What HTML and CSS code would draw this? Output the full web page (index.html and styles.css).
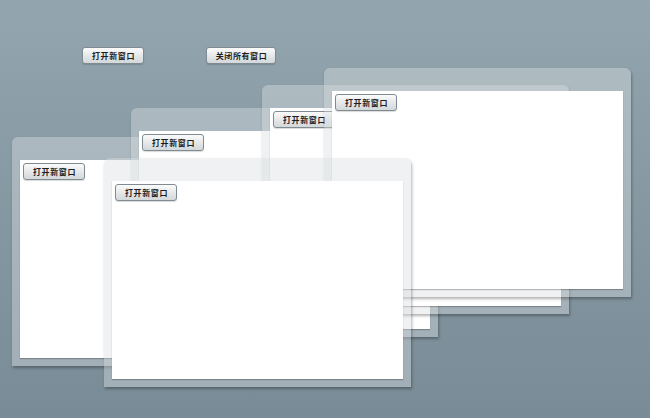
FILE: index.html
```html
<!DOCTYPE html>
<html lang="zh-CN">
<head>
    <meta charset="UTF-8">
    <meta name="viewport" content="width=device-width, initial-scale=1.0">
    <title>窗口</title>
    <link rel="stylesheet" href="styles.css">
</head>
<body>
    <div class="toolbar">
        <button class="btn">打开新窗口</button>
        <button class="btn">关闭所有窗口</button>
    </div>

    <div class="desktop">
        <div class="window win-a">
            <div class="window-body"><button class="btn">打开新窗口</button></div>
        </div>
        <div class="window win-b">
            <div class="window-body"><button class="btn">打开新窗口</button></div>
        </div>
        <div class="window win-c">
            <div class="window-body"><button class="btn">打开新窗口</button></div>
        </div>
        <div class="window win-d">
            <div class="window-body"><button class="btn">打开新窗口</button></div>
        </div>
        <div class="window win-e">
            <div class="window-body"><button class="btn">打开新窗口</button></div>
        </div>
    </div>
</body>
</html>
```

FILE: styles.css
```css
html, body {
    height: 100%;
}
body {
    margin: 0;
    overflow: hidden;
    background: linear-gradient(#93a6af, #788b96);
    font-family: "Noto Sans CJK SC", "Liberation Sans", sans-serif;
}
.toolbar {
    display: flex;
    gap: 62px;
    padding: 47px 0 0 82px;
}
.btn {
    height: 17px;
    padding: 0 0 0 1px;
    font-family: inherit;
    font-size: 8px;
    font-weight: bold;
    line-height: 15px;
    letter-spacing: 0.6px;
    color: #1e1e1e;
    white-space: nowrap;
    text-align: center;
    border: 1px solid #7f8b91;
    border-radius: 3px;
    background: linear-gradient(#fbfbfb, #e6e8e9 50%, #d3d8db);
    box-shadow: 0 1px 1px rgba(0, 0, 0, 0.15);
}
.toolbar .btn:first-child {
    width: 62px;
}
.toolbar .btn:last-child {
    width: 70px;
}
.desktop {
    position: relative;
}
.window {
    position: absolute;
    width: 307px;
    height: 229px;
    box-sizing: border-box;
    padding: 23px 8px 8px;
    border-radius: 6px 6px 0 0;
    background: rgba(218, 222, 225, 0.42);
    box-shadow: 1px 2px 3px rgba(0, 0, 0, 0.3);
}
.window-body {
    display: flex;
    align-items: flex-start;
    height: 100%;
    padding: 3px;
    box-sizing: border-box;
    background: #fff;
    box-shadow: 0 1px 1px rgba(0, 0, 0, 0.25);
}
.window-body .btn {
    width: 62px;
}
/* desktop offsets are measured from below the toolbar (top 64px) */
.win-a { left: 12px; top: 73px; }
.win-b { left: 131px; top: 44px; }
.win-c { left: 262px; top: 21px; }
.win-d { left: 324px; top: 4px; }
.win-e { left: 104px; top: 94px; }
```
